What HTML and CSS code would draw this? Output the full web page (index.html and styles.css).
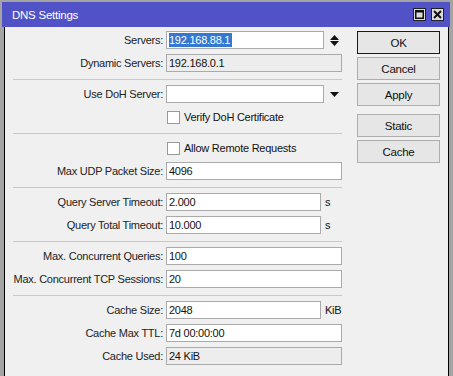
FILE: index.html
```html
<!DOCTYPE html>
<html lang="en">
<head>
	<meta charset="UTF-8">
	<title>DNS Settings</title>
	<link rel="stylesheet" href="styles.css">
</head>
<body>
	<div class="window">
		<div class="titleBar">
			<span class="title">DNS Settings</span>
			<div class="titleButtons">
				<span class="titleBtn">
					<svg width="9" height="9" viewBox="0 0 9 9"><rect x="0.75" y="0.75" width="7.5" height="7.5" fill="none" stroke="#111" stroke-width="1.5"/><rect x="0" y="0" width="9" height="2.5" fill="#111"/></svg>
				</span>
				<span class="titleBtn">
					<svg width="9" height="9" viewBox="0 0 9 9"><path d="M1 1 L8 8 M8 1 L1 8" stroke="#111" stroke-width="2"/></svg>
				</span>
			</div>
		</div>
		<div class="content">
			<div class="form">
				<div class="section first">
					<div class="row">
						<span class="label">Servers:</span>
						<div class="field">
							<div class="input wSpin"><span class="selected">192.168.88.1</span></div>
							<span class="spin">
								<svg width="9" height="11" viewBox="0 0 9 11"><path d="M0 5 L4.5 0 L9 5 Z M0 6 L9 6 L4.5 11 Z" fill="#111"/></svg>
							</span>
						</div>
					</div>
					<div class="row">
						<span class="label">Dynamic Servers:</span>
						<div class="field"><div class="input wFull readOnly">192.168.0.1</div></div>
					</div>
				</div>
				<div class="section">
					<div class="row">
						<span class="label">Use DoH Server:</span>
						<div class="field">
							<div class="input wSpin"></div>
							<span class="spin">
								<svg width="9" height="5" viewBox="0 0 9 5"><path d="M0 0 L9 0 L4.5 5 Z" fill="#111"/></svg>
							</span>
						</div>
					</div>
					<div class="row">
						<span class="label"></span>
						<div class="field"><span class="checkbox"></span><span class="checkText">Verify DoH Certificate</span></div>
					</div>
				</div>
				<div class="section">
					<div class="row">
						<span class="label"></span>
						<div class="field"><span class="checkbox"></span><span class="checkText">Allow Remote Requests</span></div>
					</div>
					<div class="row">
						<span class="label">Max UDP Packet Size:</span>
						<div class="field"><div class="input wFull">4096</div></div>
					</div>
				</div>
				<div class="section">
					<div class="row">
						<span class="label">Query Server Timeout:</span>
						<div class="field"><div class="input wUnit">2.000</div><span class="unit">s</span></div>
					</div>
					<div class="row">
						<span class="label">Query Total Timeout:</span>
						<div class="field"><div class="input wUnit">10.000</div><span class="unit">s</span></div>
					</div>
				</div>
				<div class="section">
					<div class="row">
						<span class="label">Max. Concurrent Queries:</span>
						<div class="field"><div class="input wFull">100</div></div>
					</div>
					<div class="row">
						<span class="label">Max. Concurrent TCP Sessions:</span>
						<div class="field"><div class="input wFull">20</div></div>
					</div>
				</div>
				<div class="section">
					<div class="row">
						<span class="label">Cache Size:</span>
						<div class="field"><div class="input wUnit">2048</div><span class="unit">KiB</span></div>
					</div>
					<div class="row">
						<span class="label">Cache Max TTL:</span>
						<div class="field"><div class="input wFull">7d 00:00:00</div></div>
					</div>
					<div class="row">
						<span class="label">Cache Used:</span>
						<div class="field"><div class="input wFull readOnly">24 KiB</div></div>
					</div>
				</div>
			</div>
			<div class="buttons">
				<span class="btn default">OK</span>
				<span class="btn">Cancel</span>
				<span class="btn">Apply</span>
				<span class="btn gapTop">Static</span>
				<span class="btn">Cache</span>
			</div>
		</div>
	</div>
</body>
</html>
```

FILE: styles.css
```css
* {
	margin: 0;
	padding: 0;
	box-sizing: border-box;
}

body {
	font-family: "Liberation Sans", Arial, sans-serif;
	font-size: 11px;
	letter-spacing: -0.25px;
	color: #111;
	background-color: #a4a4a4;
}

.window {
	width: 453px;
	height: 376px;
	padding: 2px 3px 0 2px;
	background-color: #a4a4a4;
	display: flex;
	flex-direction: column;
}

.titleBar {
	height: 25px;
	background-color: #5052c6;
	display: flex;
	align-items: center;
	justify-content: space-between;
	padding: 0 6px 0 10px;
}

.title {
	color: #fff;
	font-size: 11.5px;
}

.titleButtons {
	display: flex;
	gap: 5px;
}

.titleBtn {
	width: 13px;
	height: 13px;
	background-color: #dcdcdc;
	border: 1px solid #222;
	display: flex;
	align-items: center;
	justify-content: center;
}

.content {
	flex: 1;
	margin: 0 1px 0 2px;
	background-color: #f0f0f0;
	border-left: 1px solid #000;
	border-right: 1px solid #000;
	display: flex;
	gap: 15px;
	padding: 4px 0 0 8px;
}

.form {
	width: 329px;
}

.section {
	border-top: 1px solid #c8c8c8;
	padding: 5px 0 7px 0;
	display: flex;
	flex-direction: column;
	gap: 5px;
}

.section.first {
	border-top: none;
	padding-top: 0;
}

.row {
	height: 18px;
	display: flex;
	align-items: center;
}

.label {
	width: 150px;
	flex-shrink: 0;
	display: flex;
	justify-content: flex-end;
	white-space: nowrap;
	margin-right: 3px;
	color: #222;
}

.field {
	display: flex;
	align-items: center;
}

.input {
	height: 18px;
	background-color: #fff;
	border: 1px solid #aaa;
	padding: 0 2px;
	line-height: 16px;
	white-space: nowrap;
}

.input.readOnly {
	background-color: #ededed;
}

.wFull {
	width: 176px;
}

.wSpin {
	width: 158px;
}

.wUnit {
	width: 155px;
}

.selected {
	display: inline-block;
	background-color: #3478d4;
	color: #fff;
	line-height: 14px;
	padding-right: 2px;
}

.spin {
	margin-left: 6px;
	display: flex;
	align-items: center;
}

.unit {
	margin-left: 4px;
}

.checkbox {
	width: 13px;
	height: 13px;
	background-color: #fff;
	border: 1px solid #999;
	margin-left: 1px;
}

.checkText {
	margin-left: 4px;
}

.buttons {
	width: 83px;
	display: flex;
	flex-direction: column;
	gap: 3px;
}

.btn {
	height: 23px;
	background-color: #e6e6e6;
	border: 1px solid #adadad;
	display: flex;
	align-items: center;
	justify-content: center;
	font-size: 11.5px;
}

.btn.default {
	border: 1px solid #1a1a1a;
}

.btn.gapTop {
	margin-top: 5px;
}
```
